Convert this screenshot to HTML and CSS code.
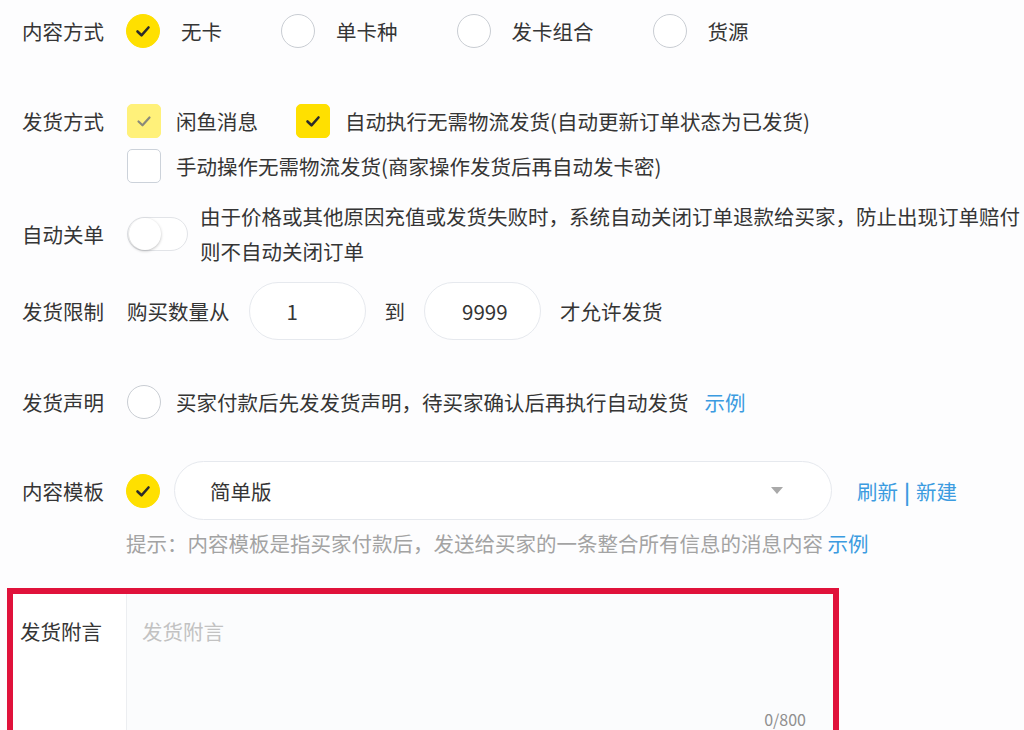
FILE: index.html
```html
<!DOCTYPE html>
<html lang="zh-CN">
<head>
<meta charset="utf-8">
<title>发货设置</title>
<link rel="stylesheet" href="styles.css">
</head>
<body>
<div class="form">
  <div class="row row-type">
    <div class="label">内容方式</div>
    <div class="options">
      <div class="opt"><span class="radio on"><svg viewBox="0 0 34 34" width="34" height="34"><path d="M11.5 17.5 L15.5 21.3 L22.5 13.5" fill="none" stroke="#2b2b2b" stroke-width="2.6" stroke-linecap="round" stroke-linejoin="round"/></svg></span><span class="txt">无卡</span></div>
      <div class="opt"><span class="radio"></span><span class="txt">单卡种</span></div>
      <div class="opt"><span class="radio"></span><span class="txt">发卡组合</span></div>
      <div class="opt"><span class="radio"></span><span class="txt">货源</span></div>
    </div>
  </div>

  <div class="row row-ship">
    <div class="label">发货方式</div>
    <div class="lines">
      <div class="line">
        <div class="chk-opt"><span class="check light"><svg viewBox="0 0 34 34" width="34" height="34"><path d="M11.5 17.5 L15.5 21.3 L22.5 13.5" fill="none" stroke="#8a8a7a" stroke-width="2.2" stroke-linecap="round" stroke-linejoin="round"/></svg></span><span class="txt">闲鱼消息</span></div>
        <div class="chk-opt"><span class="check on"><svg viewBox="0 0 34 34" width="34" height="34"><path d="M11.5 17.5 L15.5 21.3 L22.5 13.5" fill="none" stroke="#2b2b2b" stroke-width="2.6" stroke-linecap="round" stroke-linejoin="round"/></svg></span><span class="txt">自动执行无需物流发货(自动更新订单状态为已发货)</span></div>
      </div>
      <div class="line">
        <div class="chk-opt"><span class="check"></span><span class="txt">手动操作无需物流发货(商家操作发货后再自动发卡密)</span></div>
      </div>
    </div>
  </div>

  <div class="row row-close">
    <div class="label">自动关单</div>
    <span class="toggle"><span class="knob"></span></span>
    <div class="desc">
      <span class="desc-line">由于价格或其他原因充值或发货失败时，系统自动关闭订单退款给买家，防止出现订单赔付</span>
      <span class="desc-line">则不自动关闭订单</span>
    </div>
  </div>

  <div class="row row-limit">
    <div class="label">发货限制</div>
    <div class="limit">
      <span class="txt">购买数量从</span>
      <span class="num">1</span>
      <span class="txt">到</span>
      <span class="num">9999</span>
      <span class="txt">才允许发货</span>
    </div>
  </div>

  <div class="row row-decl">
    <div class="label">发货声明</div>
    <div class="chk-opt"><span class="radio"></span><span class="txt">买家付款后先发发货声明，待买家确认后再执行自动发货</span><a class="link">示例</a></div>
  </div>

  <div class="row row-tpl">
    <div class="label">内容模板</div>
    <span class="radio on"><svg viewBox="0 0 34 34" width="34" height="34"><path d="M11.5 17.5 L15.5 21.3 L22.5 13.5" fill="none" stroke="#2b2b2b" stroke-width="2.6" stroke-linecap="round" stroke-linejoin="round"/></svg></span>
    <div class="select"><span class="sel-text">简单版</span><span class="caret"></span></div>
    <div class="actions"><a class="link">刷新</a><span class="sep">|</span><a class="link">新建</a></div>
  </div>
  <div class="hint">提示：内容模板是指买家付款后，发送给买家的一条整合所有信息的消息内容 <a class="link">示例</a></div>

  <div class="note-box">
    <div class="note-label">发货附言</div>
    <div class="note-area">
      <div class="placeholder">发货附言</div>
      <div class="counter">0/800</div>
    </div>
  </div>
</div>
</body>
</html>
```

FILE: styles.css
```css
* { box-sizing: border-box; }
html, body {
  margin: 0;
  padding: 0;
  background: #fdfdfe;
  overflow: hidden;
}
body {
  font-family: "Noto Sans CJK SC", "Noto Sans", sans-serif;
  font-size: 20.5px;
  color: #353535;
  width: 1024px;
  height: 730px;
}
.form {
  display: flex;
  flex-direction: column;
}
.row {
  display: flex;
  align-items: center;
  padding-left: 22px;
}
.label {
  width: 105px;
  flex: none;
  line-height: 34px;
  white-space: nowrap;
}
.txt { white-space: nowrap; line-height: 34px; }

.radio {
  width: 34px;
  height: 34px;
  border-radius: 50%;
  border: 1px solid #c9cdd3;
  background: #fff;
  flex: none;
  display: inline-flex;
  align-items: center;
  justify-content: center;
}
.radio.on {
  background: #ffe000;
  border-color: #ffe000;
}
.radio svg, .check svg { display: block; flex: none; }

.check {
  width: 34px;
  height: 34px;
  border-radius: 5px;
  border: 1px solid #ccd2da;
  background: #fff;
  flex: none;
  display: inline-flex;
  align-items: center;
  justify-content: center;
}
.check.on { background: #ffe000; border-color: #ffe000; }
.check.light { background: #fff17a; border-color: #fff17a; }

/* row 1 */
.row-type { height: 62px; }
.row-type .label { margin-right: -1px; }
.options { display: flex; gap: 59px; }
.opt { display: flex; align-items: center; gap: 21px; }

/* row 2 */
.row-ship { margin-top: 42px; align-items: flex-start; }
.lines { display: flex; flex-direction: column; gap: 11px; }
.line { display: flex; align-items: center; gap: 38px; }
.chk-opt { display: flex; align-items: center; gap: 15px; }

/* row 3 */
.row-close { margin-top: 16px; }
.toggle {
  width: 61px;
  height: 34px;
  border-radius: 17px;
  border: 1px solid #e2e4e8;
  background: #fff;
  flex: none;
  display: flex;
  align-items: center;
  padding-left: 1px;
}
.knob {
  width: 32px;
  height: 32px;
  border-radius: 50%;
  background: #fff;
  box-shadow: 0 1px 3px rgba(0,0,0,0.25);
}
.desc {
  margin-left: 12px;
  display: flex;
  flex-direction: column;
}
.desc-line { line-height: 35px; white-space: nowrap; }

/* row 4 */
.row-limit { margin-top: 13px; }
.limit { display: flex; align-items: center; gap: 19px; }
.num {
  width: 117px;
  height: 58px;
  border-radius: 29px;
  border: 1px solid #e6e9ee;
  background: #fff;
  padding-left: 37px;
  line-height: 56px;
}

/* row 5 */
.row-decl { margin-top: 45px; }
.row-decl .link { margin-left: 1px; }
.link { color: #3b9be0; text-decoration: none; white-space: nowrap; }

/* row 6 */
.row-tpl { margin-top: 42px; }
.row-tpl .radio { margin-left: -1px; }
.select {
  margin-left: 14px;
  width: 658px;
  height: 59px;
  border-radius: 30px;
  border: 1px solid #e6e9ee;
  background: #fff;
  display: flex;
  align-items: center;
  justify-content: space-between;
  padding-left: 35px;
  padding-right: 48px;
}
.caret {
  width: 0;
  height: 0;
  border-left: 6px solid transparent;
  border-right: 6px solid transparent;
  border-top: 7px solid #a9a9a9;
}
.actions {
  margin-left: 25px;
  display: flex;
  align-items: center;
  gap: 6px;
}
.sep { color: #3b9be0; font-weight: bold; }
.hint {
  margin-top: 8px;
  padding-left: 126px;
  line-height: 30px;
  color: #a3a3a3;
  white-space: nowrap;
}

/* note box */
.note-box {
  margin-top: 30px;
  margin-left: 7px;
  width: 832px;
  height: 170px;
  border: 6px solid #e0123b;
  border-bottom: none;
  display: flex;
  background: #fff;
}
.note-label {
  width: 113px;
  flex: none;
  padding-left: 7px;
  padding-top: 22px;
  line-height: 30px;
  white-space: nowrap;
}
.note-area {
  flex: 1;
  border-left: 1px solid #eceef1;
  background: #fbfcfd;
  padding: 22px 27px 0 15px;
  display: flex;
  flex-direction: column;
}
.placeholder {
  color: #c2c2c2;
  line-height: 30px;
}
.counter {
  margin-top: 62px;
  align-self: flex-end;
  font-size: 16px;
  color: #8f8f8f;
  line-height: 22px;
}
```
